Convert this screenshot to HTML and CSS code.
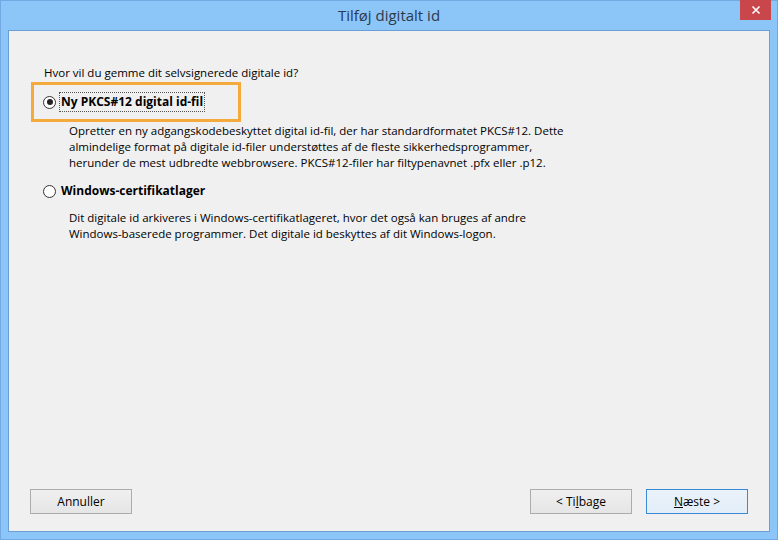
FILE: index.html
```html
<!DOCTYPE html>
<html lang="da">
<head>
<meta charset="utf-8">
<title>Tilføj digitalt id</title>
<link rel="stylesheet" href="styles.css">
</head>
<body>
<div class="window">
  <div class="titlebar">
    <div class="title">Tilføj digitalt id</div>
    <div class="close"><svg width="10" height="10" viewBox="0 0 10 10"><path d="M1.5 1.5 L8.5 8.5 M8.5 1.5 L1.5 8.5" stroke="#fff" stroke-width="1.6"/></svg></div>
  </div>
  <div class="client">
    <div class="content">
      <p class="question">Hvor vil du gemme dit selvsignerede digitale id?</p>
      <div class="highlight">
        <div class="option">
          <span class="radio checked"></span>
          <span class="label focus">Ny PKCS#12 digital id-fil</span>
        </div>
      </div>
      <p class="desc">Opretter en ny adgangskodebeskyttet digital id-fil, der har standardformatet PKCS#12. Dette almindelige format på digitale id-filer understøttes af de fleste sikkerhedsprogrammer, herunder de mest udbredte webbrowsere. PKCS#12-filer har filtypenavnet .pfx eller .p12.</p>
      <div class="option option2">
        <span class="radio"></span>
        <span class="label">Windows-certifikatlager</span>
      </div>
      <p class="desc desc2">Dit digitale id arkiveres i Windows-certifikatlageret, hvor det også kan bruges af andre Windows-baserede programmer. Det digitale id beskyttes af dit Windows-logon.</p>
    </div>
    <div class="buttons">
      <button class="btn">Annuller</button>
      <div class="right">
        <button class="btn">&lt; Ti<u>l</u>bage</button>
        <button class="btn default"><u>N</u>æste &gt;</button>
      </div>
    </div>
  </div>
</div>
</body>
</html>
```
FILE: styles.css
```css
html, body {
  margin: 0;
  padding: 0;
  background: #8cc5f8;
}
body {
  font-family: "Open Sans", "Noto Sans", sans-serif;
  font-size: 12px;
  color: #000;
}
.window {
  width: 778px;
  height: 540px;
  box-sizing: border-box;
  border: 1px solid #72a9e3;
  background: #8cc5f8;
  display: flex;
  flex-direction: column;
  padding: 0 7px 7px 7px;
}
.titlebar {
  height: 29px;
  position: relative;
  display: flex;
  align-items: center;
  justify-content: center;
}
.title {
  font-size: 15px;
  color: #2c3a4a;
  font-family: "Open Sans", sans-serif;
  margin-top: -1px;
}
.close {
  position: absolute;
  right: -1px;
  top: -1px;
  width: 31px;
  height: 20px;
  background: #c9474a;
  display: flex;
  align-items: center;
  justify-content: center;
}
.client {
  flex: 1;
  background: #f0f0f0;
  border: 1px solid #6c9ed6;
  display: flex;
  flex-direction: column;
  justify-content: space-between;
}
.content {
  padding: 34px 0 0 22px;
}
.question {
  margin: 0;
  line-height: 16px;
  font-size: 11.5px;
  padding-left: 13px;
}
.highlight {
  margin-top: 1px;
  box-sizing: border-box;
  width: 210px;
  height: 40px;
  border: 3px solid #f5aa3e;
  display: flex;
  align-items: center;
  padding-left: 9px;
}
.option {
  display: flex;
  align-items: center;
  gap: 3px;
}
.radio {
  width: 11px;
  height: 11px;
  border: 1px solid #333;
  border-radius: 50%;
  background: #fff;
  position: relative;
  box-sizing: content-box;
}
.radio.checked::after {
  content: "";
  position: absolute;
  left: 2.5px;
  top: 2.5px;
  width: 6px;
  height: 6px;
  border-radius: 50%;
  background: #222;
}
.label {
  font-weight: 700;
  font-size: 12px;
  line-height: 18px;
  padding: 0 1px;
  border: 1px dotted transparent;
}
.label.focus {
  border-color: #555;
}
.desc {
  margin: 1px 0 0 38px;
  width: 510px;
  line-height: 16px;
  font-size: 11.5px;
}
.option2 {
  margin: 10px 0 0 12px;
}
.desc2 {
  margin-top: 9px;
  width: 490px;
}
.buttons {
  display: flex;
  justify-content: space-between;
  padding: 0 21px 17px 21px;
}
.right {
  display: flex;
  gap: 14px;
}
.btn {
  width: 102px;
  height: 25px;
  font-family: "Open Sans", sans-serif;
  font-size: 12px;
  color: #000;
  background: linear-gradient(#f0f0f0, #e5e5e5);
  border: 1px solid #acacac;
  padding: 0;
}
.btn.default {
  border-color: #3c8ad6;
  background: linear-gradient(#eaf2fa, #e3eef9);
}
u {
  text-decoration: underline;
}
```
